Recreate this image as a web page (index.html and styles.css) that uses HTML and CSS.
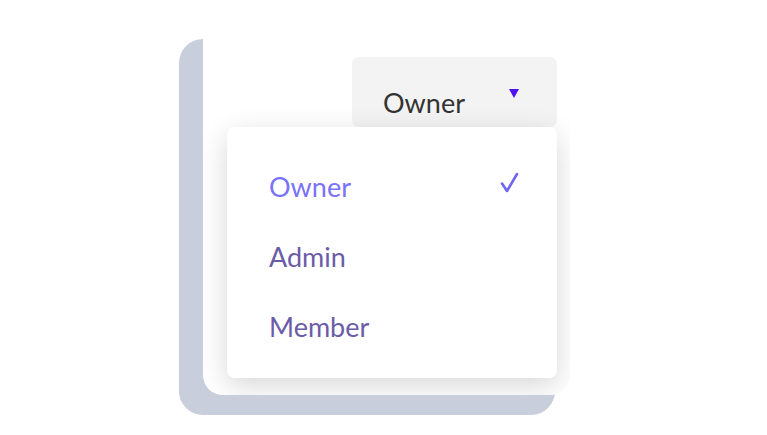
FILE: index.html
```html
<!DOCTYPE html>
<html lang="en">
<head>
<meta charset="utf-8">
<title>Role dropdown</title>
<link rel="stylesheet" href="styles.css">
</head>
<body>
  <div class="stage">
    <div class="back-card">
      <div class="front-card">
        <button class="select" type="button">
          <span class="select-label">Owner</span>
          <svg class="caret" width="10" height="9" viewBox="0 0 10 9"><path d="M0 0 H10 L5 9 Z" fill="#4d12f5"/></svg>
        </button>
        <ul class="menu">
          <li class="item item-active">
            <span>Owner</span>
            <svg class="check" width="19" height="21" viewBox="0 0 19 21"><path d="M2 11.5 L7 19 L17 2" fill="none" stroke="#7166f2" stroke-width="2.6" stroke-linecap="round" stroke-linejoin="round"/></svg>
          </li>
          <li class="item"><span>Admin</span></li>
          <li class="item"><span>Member</span></li>
        </ul>
      </div>
    </div>
  </div>
</body>
</html>
```

FILE: styles.css
```css
* {
  box-sizing: border-box;
}

html,
body {
  margin: 0;
  padding: 0;
  background: #ffffff;
}

body {
  font-family: "Lato", "Liberation Sans", sans-serif;
  width: 767px;
  height: 435px;
  overflow: hidden;
}

.stage {
  padding: 39px 0 0 179px;
}

.back-card {
  position: relative;
  width: 376px;
  height: 376px;
  background: #c9cedc;
  border-radius: 24px;
}

.front-card {
  position: absolute;
  left: 24px;
  top: -20px;
  width: 367px;
  height: 376px;
  background: #ffffff;
  border-radius: 20px;
  overflow: hidden;
  display: flex;
  flex-direction: column;
  align-items: flex-end;
  padding: 38px 13px 0 24px;
}

.select {
  width: 205px;
  height: 70px;
  flex: none;
  border: 0;
  margin: 0;
  background: #f3f3f3;
  border-radius: 7px;
  display: flex;
  justify-content: space-between;
  align-items: center;
  padding: 20px 38px 0 31px;
  font: inherit;
  cursor: pointer;
}

.select-label {
  font-size: 27px;
  color: #333333;
  line-height: 1;
}

.caret {
  align-self: flex-start;
  margin-top: 12px;
  flex: none;
}

.menu {
  position: relative;
  width: 330px;
  height: 251px;
  flex: none;
  list-style: none;
  margin: 0;
  padding: 24px 40px 0 42px;
  background: #ffffff;
  border-radius: 8px;
  box-shadow: 0 8px 28px rgba(0, 0, 0, 0.16);
}

.item {
  height: 70px;
  display: flex;
  align-items: center;
  justify-content: space-between;
  font-size: 27px;
  line-height: 1;
  color: #6b5ca7;
}

.item-active {
  color: #7a72f8;
}

.check {
  flex: none;
  margin-top: -8px;
  margin-right: -2px;
}
```
